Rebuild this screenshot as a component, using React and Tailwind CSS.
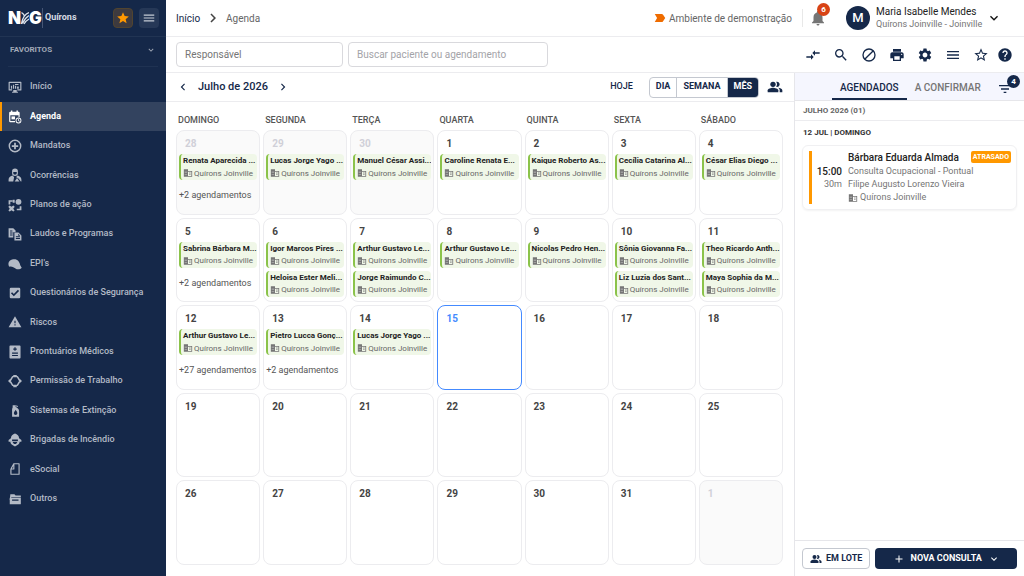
import React, { useState } from "react";
import {
  MdAdd,
  MdChevronLeft,
  MdChevronRight,
  MdCompareArrows,
  MdExpandMore,
  MdFilterList,
  MdHelp,
  MdMenu,
  MdNotifications,
  MdPrint,
  MdSearch,
  MdSettings,
  MdStar,
  MdStarBorder,
  MdWarning,
} from "react-icons/md";

/////////////////////////////////
// ICONES
/////////////////////////////////
const Svg = ({ children, className = "w-3.5 h-3.5" }) => (
  <svg viewBox="0 0 24 24" fill="currentColor" className={className} aria-hidden="true">
    {children}
  </svg>
);

const IconInicio = () => (
  <Svg>
    <path d="M2 3h20a1 1 0 0 1 1 1v13a1 1 0 0 1-1 1h-6v-2h5V5H3v11h4v2H2a1 1 0 0 1-1-1V4a1 1 0 0 1 1-1z" />
    <path d="M5 10h2v5H5zM8.500 8h2v7h-2zM12 10h2v5h-2zM15.500 11h3v4h-3zM12 7h6v1.500h-6zM9 17h6v3h2v2H7v-2h2z" />
  </Svg>
);

const IconAgenda = () => (
  <Svg>
    <path d="M20 12V5a2 2 0 0 0-2-2h-1V1h-2.500v2h-7V1H5v2H4a2 2 0 0 0-2 2v14a2 2 0 0 0 2 2h8v-2H4V9h14v3z" />
    <path d="M6 11h6v5H6z" />
    <path d="M18 13a5 5 0 1 0 0 10 5 5 0 0 0 0-10zm0 1.500a3.500 3.500 0 1 1 0 7 3.500 3.500 0 0 1 0-7zm-.6 1v3l2.300 1.500.7-1-1.700-1.100v-2.400z" />
  </Svg>
);

const IconMandatos = () => (
  <Svg>
    <path
      fillRule="evenodd"
      d="M12 1a11 11 0 1 0 0 22 11 11 0 0 0 0-22zm0 2.500a8.500 8.500 0 1 1 0 17 8.500 8.500 0 0 1 0-17z"
    />
    <path d="M10.500 6.500h3v4h4v3h-4v4h-3v-4h-4v-3h4z" />
  </Svg>
);

const IconOcorrencias = () => (
  <Svg>
    <path fillRule="evenodd" d="M7 5.500a5 4.500 0 0 1 10 0V9a5 4.500 0 0 1-10 0zM9 7v2a3 2.500 0 0 0 6 0V7z" />
    <path d="M8 13l2.500 3-1.500 7H1v-3c0-4 3-6 7-7zM16 13l-2 3 4 2 4 5h1v-3c0-4-3-6-7-7z" />
    <path d="M11.500 23l4-6 4 6z" />
  </Svg>
);

const IconPlanos = () => (
  <Svg>
    <circle cx="18" cy="6.500" r="5" />
    <path d="M1 4h7v2.500H4V11H1zM23 21h-8v-2.500h5V14h3z" />
    <path d="M8 3h3.500v5H8zM1 14l2-1 3 2 3-2 2 1v2l-2 2.500 2 2.500v1l-2 1-3-2-3 2-2-1v-1l2-2.500L1 16z" />
  </Svg>
);

const IconLaudos = () => (
  <Svg>
    <path fillRule="evenodd" d="M1 2h8l4 4v3H9v9H1zm2.500 4v1.500h4V6zm0 3.500V11H8V9.500zm0 3.500v1.500H8V13z" />
    <path fillRule="evenodd" d="M11 9.500h7l5 5V23H11zm2.500 6.500v1.500h7V16zm0 3v1.500h7V19zm4-7.500v3.500H21z" />
  </Svg>
);

const IconEpi = () => (
  <Svg>
    <path d="M1 14c-1-5 2-9 8-10 7-1 11 4 12 10l2.500 4.500c-2 2.500-5 3-8.500 2.500l-5-3c-3-1.500-5-2-8-1.500z" />
  </Svg>
);

const IconQuestionario = () => (
  <Svg>
    <path
      fillRule="evenodd"
      d="M5 3h14a2 2 0 0 1 2 2v14a2 2 0 0 1-2 2H5a2 2 0 0 1-2-2V5a2 2 0 0 1 2-2zm5 14.500l9-9-2-2-7 7-3-3-2 2z"
    />
  </Svg>
);

const IconProntuario = () => (
  <Svg>
    <path
      fillRule="evenodd"
      d="M4 1h16a1.500 1.500 0 0 1 1.500 1.500v19A1.500 1.500 0 0 1 20 23H4a1.500 1.500 0 0 1-1.500-1.500v-19A1.500 1.500 0 0 1 4 1zm7 3v2H9v2h2v2h2V8h2V6h-2V4zM7 13v2h10v-2zm0 4v2h10v-2z"
    />
  </Svg>
);

const IconPermissao = () => (
  <Svg>
    <path
      d="M8 4.500h8l4.500 7.500-4.500 7.500H8L3.500 12z"
      fill="none"
      stroke="currentColor"
      strokeWidth="2.500"
      strokeLinejoin="round"
    />
    <path d="M9 1.500h6v3H9zM9 19.500h6v3H9zM0 12l4-4v8zM24 12l-4-4v8z" />
  </Svg>
);

const IconExtincao = () => (
  <Svg>
    <path
      fillRule="evenodd"
      d="M8 2h5v3l2 1c3 2 4 4 4 7v9H7V12c0-3 0-4 1-6zm5 8c0 2-3 3-3 6a3 3 0 0 0 6 0c0-3-2-4-3-6z"
    />
    <path d="M13 2l4 1.500V5l-4-1z" />
  </Svg>
);

const IconBrigada = () => (
  <Svg>
    <path fillRule="evenodd" d="M12 1c4 1 7 4 7 8l4 3v3H1v-3l4-3c0-4 3-7 7-8zM7 11v3h10v-3z" />
    <path fillRule="evenodd" d="M4 14h16c0 5-4 7-8 9-4-2-8-4-8-9zm4 1c0 2 2 4 4 4s4-2 4-4z" />
  </Svg>
);

const IconEsocial = () => (
  <Svg>
    <path
      d="M10 3h9v18H5v-9h5zM5 12l5-9"
      fill="none"
      stroke="currentColor"
      strokeWidth="2"
      strokeLinejoin="round"
    />
  </Svg>
);

const IconOutros = () => (
  <Svg>
    <path d="M4 4h7l2 2h9v3H6l-3 5z" />
    <path fillRule="evenodd" d="M3 10h19v10a1 1 0 0 1-1 1H3zm4 3v2h11v-2z" />
  </Svg>
);

const IconBloqueio = () => (
  <Svg className="w-4 h-4">
    <circle cx="12" cy="12" r="9" fill="none" stroke="currentColor" strokeWidth="2" />
    <path d="M5.600 18.400L18.400 5.600" stroke="currentColor" strokeWidth="2" />
  </Svg>
);

const IconPessoas = ({ className }) => (
  <Svg className={className}>
    <circle cx="9" cy="8" r="4" />
    <path d="M9 13c-2.670 0-8 1.340-8 4v3h16v-3c0-2.660-5.330-4-8-4z" />
    <path d="M16.670 13.130C18.040 14.060 19 15.320 19 17v3h4v-3c0-2.180-3.570-3.470-6.330-3.870z" />
    <path d="M15 12c2.210 0 4-1.790 4-4s-1.790-4-4-4c-.47 0-.91.1-1.330.24C14.500 5.270 15 6.580 15 8s-.5 2.730-1.330 3.760c.42.14.86.24 1.330.24z" />
  </Svg>
);

const IconPredio = () => (
  <Svg className="w-2.5 h-2.5 shrink-0 text-[#757575]">
    <path d="M2 3h10v18H2z" />
    <path d="M12 7h10v14H12v-2h8V9h-8z" />
    <path d="M15 11h3v2h-3zM15 15h3v2h-3z" />
    <path d="M4 7h6v1H4zM4 11h6v1H4zM4 15h6v1H4z" fill="#c8c8c8" />
  </Svg>
);

const IconAmbiente = () => (
  <Svg className="w-3.5 h-3.5 text-[#ef6c00]">
    <path d="M3 5h12c.8 0 1.500.4 2 1l4 6-4 6c-.5.6-1.200 1-2 1H3l4-7z" />
  </Svg>
);

const Logo = () => (
  <div className="flex items-center text-white">
    <span className="font-[Inter] font-black text-[17px] leading-5">N</span>
    <svg viewBox="0 0 8 14" className="w-2 h-3.5" aria-hidden="true">
      <path
        d="M8 1.500C4 3 1.500 6 .5 13M8 4.500C5.500 6 3.500 8 1.500 12.500M8 8C6 9 4.500 10.500 3 13M.5 1.500C2 2.500 3 3.500 3.500 5"
        fill="none"
        stroke="#dfe4ec"
        strokeWidth="1.300"
      />
    </svg>
    <span className="font-[Inter] font-black text-[17px] leading-5">G</span>
    <span className="w-px h-5 bg-[#465675] mr-0.5" />
    <span className="font-bold text-[9px] text-[#d6dbe4]">Quírons</span>
  </div>
);

/////////////////////////////////
// DADOS
/////////////////////////////////
const menu = [
  { nome: "Início", icon: IconInicio },
  { nome: "Agenda", icon: IconAgenda },
  { nome: "Mandatos", icon: IconMandatos },
  { nome: "Ocorrências", icon: IconOcorrencias },
  { nome: "Planos de ação", icon: IconPlanos },
  { nome: "Laudos e Programas", icon: IconLaudos },
  { nome: "EPI's", icon: IconEpi },
  { nome: "Questionários de Segurança", icon: IconQuestionario },
  { nome: "Riscos", icon: MdWarning },
  { nome: "Prontuários Médicos", icon: IconProntuario },
  { nome: "Permissão de Trabalho", icon: IconPermissao },
  { nome: "Sistemas de Extinção", icon: IconExtincao },
  { nome: "Brigadas de Incêndio", icon: IconBrigada },
  { nome: "eSocial", icon: IconEsocial },
  { nome: "Outros", icon: IconOutros },
];

const semana = ["DOMINGO", "SEGUNDA", "TERÇA", "QUARTA", "QUINTA", "SEXTA", "SÁBADO"];

const agendamentos = {
  "-28": { nomes: ["Renata Aparecida ..."], mais: 2 },
  "-29": { nomes: ["Lucas Jorge Yago ..."] },
  "-30": { nomes: ["Manuel César Assi..."] },
  1: { nomes: ["Caroline Renata E..."] },
  2: { nomes: ["Kaique Roberto As..."] },
  3: { nomes: ["Cecília Catarina Al..."] },
  4: { nomes: ["César Elias Diego ..."] },
  5: { nomes: ["Sabrina Bárbara M..."], mais: 2 },
  6: { nomes: ["Igor Marcos Pires ...", "Heloisa Ester Meli..."] },
  7: { nomes: ["Arthur Gustavo Le...", "Jorge Raimundo C..."] },
  8: { nomes: ["Arthur Gustavo Le..."] },
  9: { nomes: ["Nicolas Pedro Hen..."] },
  10: { nomes: ["Sônia Giovanna Fa...", "Liz Luzia dos Sant..."] },
  11: { nomes: ["Theo Ricardo Anth...", "Maya Sophia da M..."] },
  12: { nomes: ["Arthur Gustavo Le..."], mais: 27 },
  13: { nomes: ["Pietro Lucca Gonç..."], mais: 2 },
  14: { nomes: ["Lucas Jorge Yago ..."] },
};

// 28 a 30 de junho, julho inteiro e 1 de agosto
const dias = [
  ...[28, 29, 30].map((n) => ({ dia: n, chave: `-${n}`, fora: true })),
  ...Array.from({ length: 31 }, (_, i) => ({ dia: i + 1, chave: `${i + 1}` })),
  { dia: 1, chave: "+1", fora: true },
];

const acoes = [
  { nome: "Comparar", icon: MdCompareArrows },
  { nome: "Pesquisar", icon: MdSearch },
  { nome: "Bloquear", icon: IconBloqueio },
  { nome: "Imprimir", icon: MdPrint },
  { nome: "Configurações", icon: MdSettings },
  { nome: "Lista", icon: MdMenu },
  { nome: "Favoritar", icon: MdStarBorder },
];

/////////////////////////////////
// COMPONENTES
/////////////////////////////////
const Sidebar = () => (
  <aside className="w-[166px] shrink-0 bg-[#152849] flex flex-col">
    <div className="h-[37px] pl-2 pr-[7px] flex items-center justify-between border-b border-[#213453]">
      <Logo />
      <div className="flex gap-1.5">
        <button aria-label="Favoritos" className="w-5 h-5 rounded-sm bg-[#3d3a3f] border border-[#51442f] flex items-center justify-center">
          <MdStar className="w-3.5 h-3.5 text-[#ff9800]" />
        </button>
        <button aria-label="Menu" className="w-5 h-5 rounded-sm bg-[#263857] flex items-center justify-center">
          <MdMenu className="w-3.5 h-3.5 text-[#c5cbd6]" />
        </button>
      </div>
    </div>

    <button className="h-[30px] mx-2 pl-0.5 pr-0.5 pb-1 flex items-center justify-between border-b border-[#1f3252] text-[8px] font-bold text-[#a1a9b6]">
      FAVORITOS
      <MdExpandMore className="w-2.5 h-2.5" />
    </button>

    <nav className="flex-1 grid auto-rows-fr gap-px pt-1.5 pb-[63px]">
      {menu.map(({ nome, icon: Icon }) => {
        const ativo = nome === "Agenda";
        return (
          <a
            key={nome}
            href="#"
            className={`flex items-center gap-2 pl-1.5 border-l-2 text-[9px] ${
              ativo
                ? "bg-[#33435f] border-[#ff9800] text-white font-bold"
                : "border-transparent text-[#b3bac6] font-medium"
            }`}
          >
            <Icon className="w-3.5 h-3.5 shrink-0" />
            {nome}
          </a>
        );
      })}
    </nav>
  </aside>
);

const Header = () => (
  <header className="h-[37px] shrink-0 border-b border-[#ececef] pl-2.5 pr-[22px] flex items-center justify-between">
    <div className="flex items-center gap-1 text-[10px]">
      <a href="#" className="text-[#152849]">Início</a>
      <MdChevronRight className="w-[18px] h-[18px] text-[#444]" />
      <span className="text-[#666]">Agenda</span>
    </div>

    <div className="flex items-center">
      <IconAmbiente />
      <span className="ml-0.5 text-[10px] text-[#666]">Ambiente de demonstração</span>
      <span className="w-px h-[18px] bg-[#e8e8e8] ml-2.5 mr-1.5" />
      <button aria-label="Notificações" className="relative">
        <MdNotifications className="w-[18px] h-[18px] text-[#757575]" />
        <span className="absolute -top-1.5 left-2 w-[13px] h-[13px] rounded-full bg-[#d84315] text-white text-[8px] leading-[13px] font-bold text-center">
          6
        </span>
      </button>
      <span className="ml-[19px] w-6 h-6 rounded-full bg-[#152849] text-white text-[13px] font-medium flex items-center justify-center">
        M
      </span>
      <div className="ml-1.5 w-[110px]">
        <p className="text-[10px] leading-3 text-[#222]">Maria Isabelle Mendes</p>
        <p className="text-[9px] leading-3 text-[#757575]">Quírons Joinville - Joinville</p>
      </div>
      <button aria-label="Conta">
        <MdExpandMore className="w-4 h-4 text-[#111]" />
      </button>
    </div>
  </header>
);

const Toolbar = () => (
  <div className="h-9 shrink-0 border-b border-[#ececef] pl-2.5 pr-[11px] flex items-center justify-between">
    <div className="flex gap-[5px]">
      <input
        aria-label="Responsável"
        placeholder="Responsável"
        className="w-[167px] h-[25px] px-2 border border-[#d9d9dd] rounded-sm text-[10px] placeholder:text-[#757575]"
      />
      <input
        aria-label="Buscar paciente ou agendamento"
        placeholder="Buscar paciente ou agendamento"
        className="w-[200px] h-[25px] px-2 border border-[#d9d9dd] rounded-sm text-[10px] placeholder:text-[#a3a3a8]"
      />
    </div>
    <div className="flex items-center text-[#152849]">
      <div className="flex gap-3 mr-2">
        {acoes.map(({ nome, icon: Icon }) => (
          <button key={nome} aria-label={nome}>
            <Icon className="w-4 h-4" />
          </button>
        ))}
      </div>
      <button aria-label="Ajuda">
        <MdHelp className="w-4 h-4" />
      </button>
    </div>
  </div>
);

const Evento = ({ nome }) => (
  <div className="h-[26px] pl-0.5 border-l-2 border-[#8bc34a] bg-[#f0f7e8] rounded-sm overflow-hidden whitespace-nowrap">
    <p className="text-[8px] leading-[14px] font-bold text-[#222]">{nome}</p>
    <p className="text-[8px] leading-[9px] text-[#666] flex items-center gap-px">
      <IconPredio />
      Quírons Joinville
    </p>
  </div>
);

const Dia = ({ dia, chave, fora }) => {
  const item = agendamentos[chave];
  const hoje = chave === "15";

  return (
    <div
      className={`min-w-0 min-h-0 border rounded-lg px-0.5 ${
        hoje
          ? "border-[#448aff] text-[#448aff]"
          : fora
          ? "border-[#ececef] bg-[#fafafa] text-[#d0d0d8]"
          : "border-[#ececef] text-[#444]"
      }`}
    >
      <p className="h-[23px] pt-[7px] pl-1.5 text-[10px] leading-3 font-bold">{dia}</p>
      {item && (
        <div className="flex flex-col gap-[3px]">
          {item.nomes.map((nome) => (
            <Evento key={nome} nome={nome} />
          ))}
          {item.mais && (
            <button className="pt-1.5 text-left text-[9px] leading-3 text-[#555] whitespace-nowrap">
              +{item.mais} agendamentos
            </button>
          )}
        </div>
      )}
    </div>
  );
};

const Calendario = () => {
  const [visao, setVisao] = useState("MÊS");

  return (
    <main className="flex-1 min-w-0 flex flex-col">
      <div className="h-[29px] shrink-0 border-b border-[#ececef] pl-2.5 pr-[11px] flex items-center justify-between text-[#152849]">
        <div className="flex items-center">
          <button aria-label="Mês anterior">
            <MdChevronLeft className="w-3.5 h-3.5" />
          </button>
          <h1 className="mx-2 text-[11px] font-medium">Julho de 2026</h1>
          <button aria-label="Próximo mês">
            <MdChevronRight className="w-3.5 h-3.5" />
          </button>
        </div>
        <div className="flex items-center">
          <button className="mr-4 text-[9px] font-medium">HOJE</button>
          <div className="flex h-[21px] border border-[#c4c8d0] rounded-sm overflow-hidden">
            {["DIA", "SEMANA", "MÊS"].map((v) => (
              <button
                key={v}
                onClick={() => setVisao(v)}
                className={`px-1.5 text-[9px] font-bold border-r border-[#c4c8d0] last:border-r-0 ${
                  v === visao ? "bg-[#152849] text-white" : ""
                }`}
              >
                {v}
              </button>
            ))}
          </div>
          <button aria-label="Equipe" className="ml-2">
            <IconPessoas className="w-4 h-4" />
          </button>
        </div>
      </div>

      <div className="flex-1 min-h-0 flex flex-col pl-2.5 pr-[11px] pb-[11px]">
        <div className="h-7 grid grid-cols-7 gap-[3px] pt-[11px]">
          {semana.map((d) => (
            <span key={d} className="pl-0.5 text-[9px] leading-[14px] font-medium text-[#555]">
              {d}
            </span>
          ))}
        </div>
        <div className="flex-1 min-h-0 grid grid-cols-7 grid-rows-5 gap-[3px]">
          {dias.map((d) => (
            <Dia key={d.chave} {...d} />
          ))}
        </div>
      </div>
    </main>
  );
};

const Painel = () => (
  <section className="w-[230px] shrink-0 border-l border-[#e6e6ea] flex flex-col">
    {/* ABAS */}
    <div className="h-7 shrink-0 pl-[37px] pr-[11px] flex items-stretch bg-[#f5f6fe] border-b border-[#e6e6ea] text-[10px] font-medium">
      <button className="px-2 pt-1 border-b-2 border-[#152849] text-[#152849]">AGENDADOS</button>
      <button className="px-2 pt-0.5 text-[#757575]">A CONFIRMAR</button>
      <button aria-label="Filtros" className="relative ml-auto pt-1 text-[#152849]">
        <MdFilterList className="w-4 h-4" />
        <span className="absolute top-0.5 left-2.5 w-[13px] h-[13px] rounded-full bg-[#152849] text-white text-[8px] leading-[13px] font-bold text-center">
          4
        </span>
      </button>
    </div>

    <h2 className="h-5 shrink-0 px-2 border-b border-[#ececef] text-[8px] leading-5 font-bold text-[#666]">
      JULHO 2026 (01)
    </h2>
    <h3 className="px-2 text-[8px] leading-6 font-bold text-[#333]">12 JUL | DOMINGO</h3>

    {/* CARTAO */}
    <article className="mx-[7px] p-[5px] border border-[#f0f0f2] rounded-md shadow-xs flex">
      <span className="w-[3px] ml-px bg-[#ff9800]" />
      <div className="w-[30px] pt-3.5 text-right">
        <p className="text-[10px] leading-[13px] font-medium text-[#222]">15:00</p>
        <p className="text-[9px] leading-[13px] text-[#757575]">30m</p>
      </div>
      <div className="flex-1 pl-1.5 text-[9px] leading-[13px] text-[#757575] whitespace-nowrap">
        <div className="flex items-start justify-between">
          <p className="text-[10px] leading-[14px] font-medium text-[#222]">Bárbara Eduarda Almada</p>
          <span className="px-0.5 rounded-xs bg-[#ff9800] text-white text-[7px] leading-3 font-bold">ATRASADO</span>
        </div>
        <p>Consulta Ocupacional - Pontual</p>
        <p>Filipe Augusto Lorenzo Vieira</p>
        <p className="flex items-center gap-0.5">
          <IconPredio />
          Quírons Joinville
        </p>
      </div>
    </article>

    {/* RODAPE */}
    <footer className="mt-auto h-9 shrink-0 px-[7px] border-t border-[#e6e6ea] flex items-center gap-[5px] text-[9px] font-bold text-[#152849]">
      <button className="h-[21px] px-[7px] border border-[#c4c8d0] rounded-sm flex items-center gap-1">
        <IconPessoas className="w-3 h-3" />
        EM LOTE
      </button>
      <button className="flex-1 h-[21px] bg-[#152849] text-white rounded-sm flex items-center justify-center gap-1.5">
        <MdAdd className="w-3 h-3" />
        NOVA CONSULTA
        <MdExpandMore className="w-3 h-3" />
      </button>
    </footer>
  </section>
);

export default function App() {
  return (
    <div className="h-screen flex bg-white font-[Roboto,sans-serif] overflow-hidden">
      <Sidebar />
      <div className="flex-1 min-w-0 flex flex-col">
        <Header />
        <Toolbar />
        <div className="flex-1 min-h-0 flex">
          <Calendario />
          <Painel />
        </div>
      </div>
    </div>
  );
}
